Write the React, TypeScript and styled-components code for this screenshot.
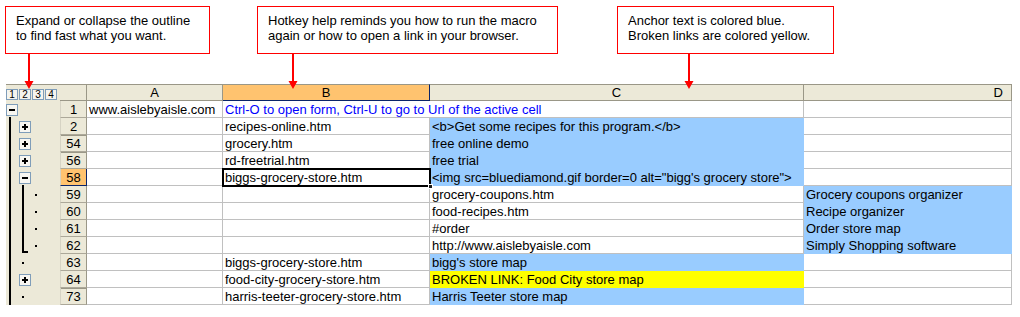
import React from 'react';
import styled, { createGlobalStyle, css } from 'styled-components';

const GRID = '#c0c0c0';
const HEAD_BG = '#ece9d8';
const HEAD_LINE = '#9a9787';
const PICK = '#ffc36f';
const PICK_LINE = '#0a246a';
const BTN_LINE = '#7f9db9';
const FILLS = { blue: '#99ccff', yellow: '#ffff00' };

type Fill = keyof typeof FILLS;
type Mark = 'none' | 'line' | 'plus' | 'minus' | 'dot' | 'end';

interface Row {
    num: number;
    marks: [Mark, Mark, Mark];
    a?: string;
    b?: string;
    c?: string;
    d?: string;
    cFill?: Fill;
    dFill?: Fill;
    thickTop?: boolean;
}

const ROWS: Row[] = [
    { num: 1, marks: ['minus', 'none', 'none'], a: 'www.aislebyaisle.com' },
    { num: 2, marks: ['line', 'plus', 'none'], b: 'recipes-online.htm', c: '<b>Get some recipes for this program.</b>', cFill: 'blue' },
    { num: 54, marks: ['line', 'plus', 'none'], b: 'grocery.htm', c: 'free online demo', cFill: 'blue', thickTop: true },
    { num: 56, marks: ['line', 'plus', 'none'], b: 'rd-freetrial.htm', c: 'free trial', cFill: 'blue', thickTop: true },
    { num: 58, marks: ['line', 'minus', 'none'], b: 'biggs-grocery-store.htm', c: '<img src=bluediamond.gif border=0 alt="bigg\'s grocery store">', cFill: 'blue' },
    { num: 59, marks: ['line', 'line', 'dot'], c: 'grocery-coupons.htm', d: 'Grocery coupons organizer', dFill: 'blue' },
    { num: 60, marks: ['line', 'line', 'dot'], c: 'food-recipes.htm', d: 'Recipe organizer', dFill: 'blue' },
    { num: 61, marks: ['line', 'line', 'dot'], c: '#order', d: 'Order store map', dFill: 'blue' },
    { num: 62, marks: ['line', 'end', 'dot'], c: 'http://www.aislebyaisle.com', d: 'Simply Shopping software', dFill: 'blue' },
    { num: 63, marks: ['line', 'dot', 'none'], b: 'biggs-grocery-store.htm', c: "bigg's store map", cFill: 'blue' },
    { num: 64, marks: ['line', 'plus', 'none'], b: 'food-city-grocery-store.htm', c: 'BROKEN LINK: Food City store map', cFill: 'yellow' },
    { num: 73, marks: ['line', 'dot', 'none'], b: 'harris-teeter-grocery-store.htm', c: 'Harris Teeter store map', cFill: 'blue', thickTop: true },
];

const ACTIVE_ROW = 58;

const GlobalStyle = createGlobalStyle`
    html, body {
        margin: 0;
        background: #fff;
    }
    body {
        font-family: "Liberation Sans", Arial, sans-serif;
        font-size: 13px;
        color: #000;
    }
`;

const Page = styled.div`
    width: 1020px;
    height: 317px;
    padding-top: 6px;
    box-sizing: border-box;
    overflow: hidden;
`;

/* ---------- callouts ---------- */

const CalloutRow = styled.div`
    display: flex;
    align-items: flex-start;
    height: 78px;
`;

const Callout = styled.div<{ $left: number; $w: number }>`
    position: relative;
    z-index: 2;
    margin-left: ${(p) => p.$left}px;
    width: ${(p) => p.$w}px;
    height: 48px;
    box-sizing: border-box;
    border: 1px solid #ff0000;
    background: #fff;
    padding: 6px 0 0 10px;
    line-height: 15px;
    white-space: nowrap;
`;

const Arrow = styled.svg<{ $x: number }>`
    position: absolute;
    top: 100%;
    left: ${(p) => p.$x}px;
    width: 10px;
    height: 36px;
    overflow: visible;
`;

const CalloutArrow = ({ x }: { x: number }) => (
    <Arrow $x={x} viewBox="0 0 10 36">
        <line x1="5" y1="0" x2="5" y2="29" stroke="#ff0000" strokeWidth="2" />
        <polygon points="0.5,28 9.5,28 5,36" fill="#ff0000" />
    </Arrow>
);

/* ---------- sheet ---------- */

const Sheet = styled.div`
    margin-left: 6px;
    display: grid;
    grid-template-columns: 54px 27px 136px 207px 374px 208px;
    grid-auto-rows: 17px;
`;

const OutlineHead = styled.div`
    background: ${HEAD_BG};
    border-top: 1px solid ${HEAD_LINE};
    box-sizing: border-box;
    display: flex;
    align-items: flex-start;
    gap: 1px;
    padding-top: 4px;
`;

const LevelBtn = styled.div`
    width: 12px;
    height: 11px;
    box-sizing: border-box;
    border: 1px solid ${BTN_LINE};
    background: #f5f4ee;
    font-size: 10px;
    line-height: 9px;
    text-align: center;
`;

const ColHead = styled.div<{ $picked?: boolean; $align?: 'center' | 'right' }>`
    background: ${(p) => (p.$picked ? PICK : HEAD_BG)};
    border-top: 1px solid ${HEAD_LINE};
    border-bottom: 1px solid ${(p) => (p.$picked ? PICK_LINE : HEAD_LINE)};
    border-right: 1px solid ${(p) => (p.$picked ? PICK_LINE : HEAD_LINE)};
    box-sizing: border-box;
    text-align: ${(p) => p.$align || 'center'};
    padding-right: ${(p) => (p.$align === 'right' ? '8px' : '0')};
    line-height: 15px;
`;

const OutlineCell = styled.div`
    background: ${HEAD_BG};
    display: grid;
    grid-template-columns: 13px 13px 13px 15px;
`;

const Slot = styled.div`
    display: flex;
    flex-direction: column;
    align-items: flex-start;
`;

const ToggleBtn = styled.div<{ $open: boolean }>`
    position: relative;
    width: 12px;
    height: 12px;
    margin-top: 3px;
    box-sizing: border-box;
    border: 1px solid ${BTN_LINE};
    background: #f7f6f1;
    flex-shrink: 0;

    &::before {
        content: '';
        position: absolute;
        left: 2px;
        top: 4px;
        width: 6px;
        height: 2px;
        background: #000;
    }

    ${(p) =>
        !p.$open &&
        css`
            &::after {
                content: '';
                position: absolute;
                left: 4px;
                top: 2px;
                width: 2px;
                height: 6px;
                background: #000;
            }
        `}
`;

const VLine = styled.div<{ $afterBtn?: boolean }>`
    width: 2px;
    margin-left: 3px;
    margin-top: ${(p) => (p.$afterBtn ? '1px' : '0')};
    flex: 1;
    background: #000;
`;

const LineEnd = styled.div`
    width: 6px;
    height: 16px;
    margin-left: 3px;
    box-sizing: border-box;
    border-left: 2px solid #000;
    border-bottom: 2px solid #000;
`;

const Dot = styled.div`
    width: 2px;
    height: 2px;
    margin: 8px 0 0 3px;
    background: #000;
`;

const RowHead = styled.div<{ $picked?: boolean; $thickTop?: boolean }>`
    background: ${(p) => (p.$picked ? PICK : HEAD_BG)};
    border-left: 1px solid #d6d3c4;
    border-right: 1px solid ${(p) => (p.$picked ? PICK_LINE : HEAD_LINE)};
    border-bottom: 1px solid ${(p) => (p.$picked ? PICK_LINE : '#aca899')};
    box-shadow: ${(p) => (p.$thickTop ? `inset 0 1px 0 ${HEAD_LINE}` : 'none')};
    box-sizing: border-box;
    text-align: center;
    padding-top: 1px;
    line-height: 15px;
`;

const Cell = styled.div<{ $fill?: Fill; $span?: number; $ink?: string; $active?: boolean }>`
    position: relative;
    grid-column: span ${(p) => p.$span || 1};
    box-sizing: border-box;
    background: ${(p) => (p.$fill ? FILLS[p.$fill] : '#fff')};
    border-right: 1px solid ${(p) => (p.$fill ? FILLS[p.$fill] : GRID)};
    border-bottom: 1px solid ${(p) => (p.$fill ? FILLS[p.$fill] : GRID)};
    color: ${(p) => p.$ink || '#000'};
    padding: 1px 0 0 2px;
    line-height: 15px;
    white-space: nowrap;
    overflow: ${(p) => (p.$active ? 'visible' : 'hidden')};

    ${(p) =>
        p.$active &&
        css`
            z-index: 1;
            &::before {
                content: '';
                position: absolute;
                left: -1px;
                top: -1px;
                right: -2px;
                bottom: -2px;
                border: 2px solid #000;
                pointer-events: none;
            }
            &::after {
                content: '';
                position: absolute;
                right: -4px;
                bottom: -4px;
                width: 5px;
                height: 5px;
                background: #1c1c1c;
                border: 1px solid #fff;
                box-sizing: border-box;
            }
        `}
`;

const OutlineMark = ({ mark, first }: { mark: Mark; first?: boolean }) => {
    switch (mark) {
        case 'line':
            return <VLine />;
        case 'plus':
            return <ToggleBtn $open={false} />;
        case 'minus':
            return (
                <>
                    <ToggleBtn $open />
                    <VLine $afterBtn />
                </>
            );
        case 'dot':
            return <Dot />;
        case 'end':
            return <LineEnd />;
        default:
            return first ? null : null;
    }
};

const SheetRow = ({ row }: { row: Row }) => {
    const active = row.num === ACTIVE_ROW;
    const blueLink = row.num === 1;
    return (
        <>
            <OutlineCell>
                {row.marks.map((m, i) => (
                    <Slot key={i}>
                        <OutlineMark mark={m} />
                    </Slot>
                ))}
            </OutlineCell>
            <RowHead $picked={active} $thickTop={row.thickTop}>
                {row.num}
            </RowHead>
            <Cell>{row.a}</Cell>
            {blueLink ? (
                <Cell $span={2} $ink="#0000ff">
                    Ctrl-O to open form, Ctrl-U to go to Url of the active cell
                </Cell>
            ) : (
                <>
                    <Cell $active={active}>{row.b}</Cell>
                    <Cell $fill={row.cFill}>{row.c}</Cell>
                </>
            )}
            <Cell $fill={row.dFill}>{row.d}</Cell>
        </>
    );
};

const App = () => (
    <>
        <GlobalStyle />
        <Page>
            <CalloutRow>
                <Callout $left={5} $w={205}>
                    Expand or collapse the outline
                    <br />
                    to find fast what you want.
                    <CalloutArrow x={18} />
                </Callout>
                <Callout $left={47} $w={301}>
                    Hotkey help reminds you how to run the macro
                    <br />
                    again or how to open a link in your browser.
                    <CalloutArrow x={30} />
                </Callout>
                <Callout $left={59} $w={217}>
                    Anchor text is colored blue.
                    <br />
                    Broken links are colored yellow.
                    <CalloutArrow x={66} />
                </Callout>
            </CalloutRow>

            <Sheet>
                <OutlineHead>
                    {[1, 2, 3, 4].map((n) => (
                        <LevelBtn key={n}>{n}</LevelBtn>
                    ))}
                </OutlineHead>
                <ColHead />
                <ColHead>A</ColHead>
                <ColHead $picked>B</ColHead>
                <ColHead>C</ColHead>
                <ColHead $align="right">D</ColHead>
                {ROWS.map((r) => (
                    <SheetRow key={r.num} row={r} />
                ))}
            </Sheet>
        </Page>
    </>
);

export default App;
